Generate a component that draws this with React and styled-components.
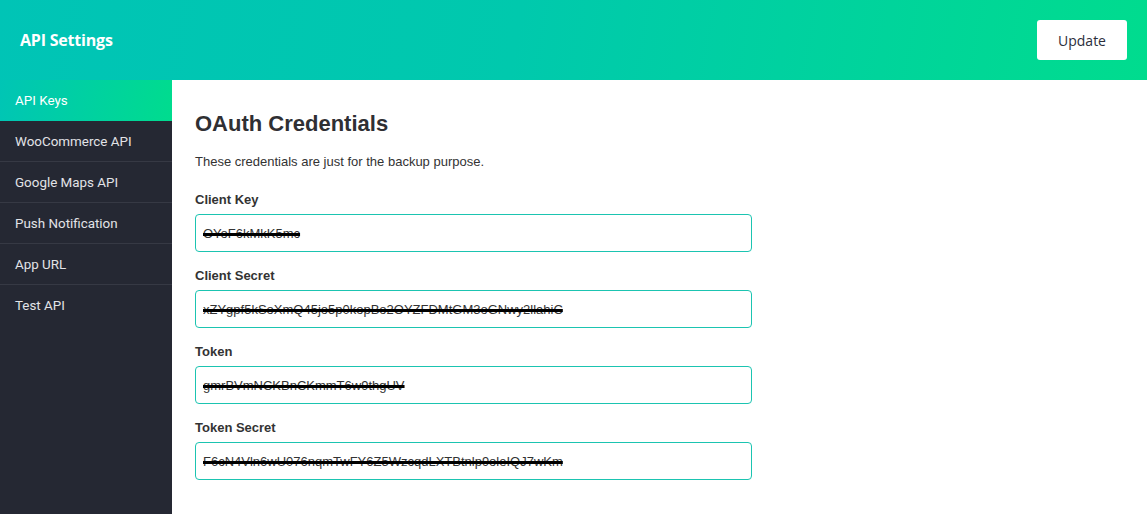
import React from 'react'
import styled, { createGlobalStyle } from 'styled-components'

const GlobalStyle = createGlobalStyle`
    * { box-sizing: border-box; }
    html, body { margin: 0; padding: 0; height: 100%; }
    body { font-family: "Liberation Sans", Arial, sans-serif; background: #fff; }
    #root { height: 100%; }
`

const Page = styled.div`
    display: flex;
    flex-direction: column;
    height: 514px;
    overflow: hidden;
`

const Header = styled.header`
    height: 80px;
    flex: none;
    display: flex;
    align-items: center;
    justify-content: space-between;
    padding: 0 20px;
    background: linear-gradient(100deg, #00c4b6 0%, #00c9ad 45%, #00dc8e 100%);
`

const Title = styled.h1`
    margin: 0;
    font-family: "Open Sans", "Noto Sans", sans-serif;
    font-size: 16px;
    font-weight: 700;
    color: #fff;
    letter-spacing: -0.2px;
`

const UpdateButton = styled.button`
    width: 90px;
    height: 40px;
    border: none;
    border-radius: 3px;
    background: #fff;
    color: #2b2e3b;
    font-family: "Open Sans", "Noto Sans", sans-serif;
    font-size: 14px;
    font-weight: 500;
    cursor: pointer;
`

const Body = styled.div`
    flex: 1;
    display: flex;
    min-height: 0;
`

const Sidebar = styled.nav`
    width: 172px;
    flex: none;
    background: #252833;
    display: flex;
    flex-direction: column;
`

const NavItem = styled.a`
    height: 41px;
    display: flex;
    align-items: center;
    padding: 0 15px;
    font-family: Roboto, "Liberation Sans", sans-serif;
    font-size: 13.4px;
    color: ${p => (p.$active ? '#fff' : '#e2e3e7')};
    text-decoration: none;
    background: ${p => (p.$active ? 'linear-gradient(100deg, #00c5b5, #00dc8e)' : 'transparent')};
    border-bottom: 1px solid ${p => (p.$divider ? '#363944' : 'transparent')};
`

const Main = styled.main`
    flex: 1;
    padding: 31px 23px 0 23px;
    color: #333;
`

const Heading = styled.h2`
    margin: 0 0 16px;
    font-size: 22px;
    line-height: 26px;
    font-weight: 700;
    color: #2f2f33;
`

const Intro = styled.p`
    margin: 0 0 20px;
    font-size: 13px;
    line-height: 18px;
    color: #333;
`

const Field = styled.div`
    width: 557px;
    margin-bottom: 15px;
`

const Label = styled.label`
    display: block;
    margin-bottom: 5px;
    font-size: 13px;
    line-height: 18px;
    font-weight: 700;
    color: #333;
`

const Input = styled.input`
    display: block;
    width: 100%;
    height: 38px;
    padding: 0 7px;
    border: 1px solid #1bc4b1;
    border-radius: 4px;
    outline: none;
    font-family: "Liberation Sans", Arial, sans-serif;
    font-size: 13px;
    color: #333;
    text-decoration: line-through;
    text-decoration-color: #000;
    text-decoration-thickness: 3px;
`

const navItems = ['API Keys', 'WooCommerce API', 'Google Maps API', 'Push Notification', 'App URL', 'Test API']

const fields = [
    { label: 'Client Key', value: 'OYoF6kMkK5mc' },
    { label: 'Client Secret', value: 'xZYgpf5kSoXmQ45jo5p0kopBo2OYZFDMtGM3oGNwy2llahiC' },
    { label: 'Token', value: 'gmrBVmNCKBnCKmmT6w9thgUV' },
    { label: 'Token Secret', value: 'F6cN4Vln6wU076nqmTwFY6Z5WzcqdLXTBtnlp9oleIQJ7wKm' },
]

export default function App() {
    return (
        <Page>
            <GlobalStyle />
            <Header>
                <Title>API Settings</Title>
                <UpdateButton>Update</UpdateButton>
            </Header>
            <Body>
                <Sidebar>
                    {navItems.map((item, i) => (
                        <NavItem
                            key={item}
                            href="#"
                            $active={i === 0}
                            $divider={i > 0 && i < navItems.length - 1}
                        >
                            {item}
                        </NavItem>
                    ))}
                </Sidebar>
                <Main>
                    <Heading>OAuth Credentials</Heading>
                    <Intro>These credentials are just for the backup purpose.</Intro>
                    {fields.map(f => (
                        <Field key={f.label}>
                            <Label>{f.label}</Label>
                            <Input type="text" defaultValue={f.value} readOnly />
                        </Field>
                    ))}
                </Main>
            </Body>
        </Page>
    )
}
